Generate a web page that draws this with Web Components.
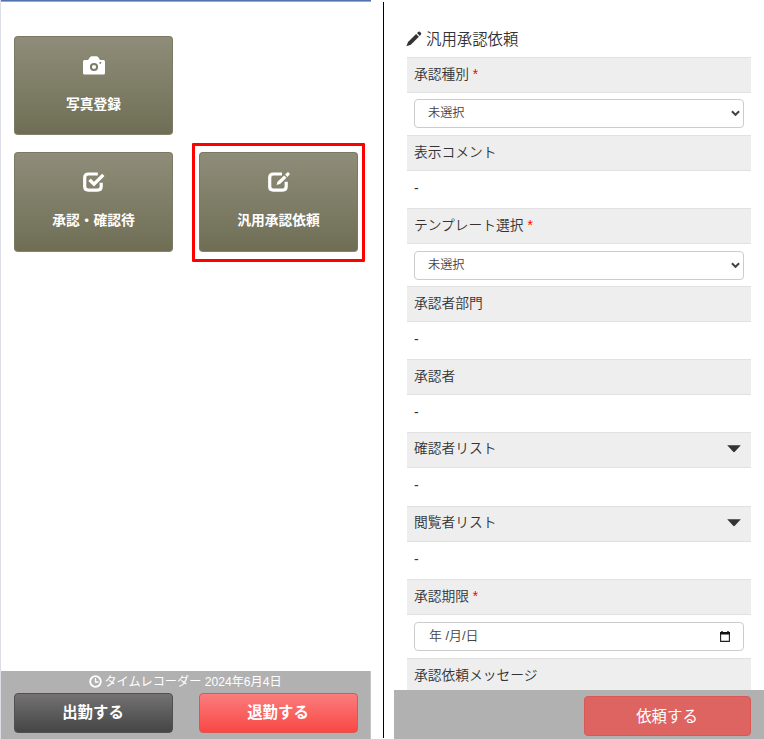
<!DOCTYPE html>
<html lang="ja"><head><meta charset="utf-8"><title>汎用承認依頼</title>
<style>
html,body{margin:0;height:739px;overflow:hidden;background:#fff}
body{font-family:"Liberation Sans","Noto Sans CJK JP",sans-serif;color:#333}
</style></head><body>
<app-screen></app-screen>
<script>
const icons={
camera:'<svg width="22" height="19" viewBox="0 0 22 19"><path fill="#fff" d="M1.5 4H5L7 1.2Q7.7.3 9 .3H13.3Q14.6.3 15.3 1.2L17 4H20.5Q22 4 22 5.5V17Q22 18.5 20.5 18.5H1.5Q0 18.5 0 17V5.5Q0 4 1.5 4Z"/><circle cx="11" cy="11" r="3.1" fill="none" stroke="#7f7d69" stroke-width="2"/><rect x="16.5" y="6" width="1.7" height="1.7" fill="#7f7d69"/></svg>',
check:'<svg width="22" height="20" viewBox="0 0 22 20"><path fill="none" stroke="#fff" stroke-width="3.2" d="M14.8 2H5.3Q1.7 2 1.7 5.6V14.6Q1.7 18.2 5.3 18.2H14.6Q18.2 18.2 18.2 14.6V10.8"/><path fill="none" stroke="#fff" stroke-width="3.4" d="M6.5 7.8 11 12.2 20.3 2.9"/></svg>',
edit:'<svg width="22" height="20" viewBox="0 0 22 20"><path fill="none" stroke="#fff" stroke-width="3.2" d="M14 2H5.3Q1.7 2 1.7 5.6V14.6Q1.7 18.2 5.3 18.2H14.6Q18.2 18.2 18.2 14.6V9.8"/><path fill="#fff" d="M8.5 13 9.5 9.7 16.2 3.5 18.5 5.8 12 12.1ZM17.1 2.6 19.2.6Q20 0 20.7.6L21.5 1.4Q22.1 2.1 21.4 2.8L19.4 4.9Z"/></svg>',
clock:'<svg width="13" height="13" viewBox="0 0 13 13" fill="none" stroke="#fff"><circle cx="6.5" cy="6.5" r="5.3" stroke-width="1.8"/><path stroke-width="1.3" d="M6.5 3V7H9.5"/></svg>',
pencil:'<svg width="16" height="16" viewBox="0 0 16 16" fill="#333"><path d="M.4 15.3 2 10.9 10.1 3 12.9 5.8 4.8 13.7ZM11 2.1 12.5.8Q13.2.2 13.9.8L15 1.9Q15.7 2.6 15.1 3.3L13.8 4.9Z"/></svg>',
chevron:'<svg width="9" height="7" viewBox="0 0 9 7"><path d="M.9 1.3 4.5 4.8 8.1 1.3" fill="none" stroke="#444" stroke-width="2"/></svg>',
calendar:'<svg width="10" height="12" viewBox="0 0 10 12"><path d="M.6 2H9.4V10.4H.6Z" fill="none" stroke="#222" stroke-width="1.1"/><path d="M0 1H1.3V0H2.7V1H7.3V0H8.7V1H10V3.4H0Z" fill="#111"/></svg>',
caret:'<svg width="14" height="8" viewBox="0 0 14 8"><path d="M.2.3H13.8L7.8 6.8Q7 7.6 6.2 6.8Z" fill="#333"/></svg>'};
function define(name,css,html){
 customElements.define(name,class extends HTMLElement{
  constructor(){super();this.attachShadow({mode:'open'})}
  connectedCallback(){this.shadowRoot.innerHTML='<style>*{box-sizing:border-box}'+css+'</style>'+(typeof html==='function'?html(this):html)}
 });
}
define('ui-icon',':host{display:inline-flex;flex:none}svg{display:block}',e=>icons[e.getAttribute('name')]);
define('menu-tile',`:host{display:flex;flex-direction:column;align-items:center;box-sizing:border-box;width:159px;height:100px;padding-top:19px;border:1px solid #7b7963;border-bottom-color:#85836f;border-radius:4px;background:linear-gradient(#8f8d79,#6f6e55);color:#fff}
 span{margin-top:17px;font-size:13.75px;line-height:24px;font-weight:700;white-space:nowrap}ui-icon{height:20px;align-items:flex-start}`,e=>`<ui-icon name="${e.getAttribute('icon')}"></ui-icon><span><slot></slot></span>`);
define('clock-button',`:host{display:flex;align-items:center;justify-content:center;box-sizing:border-box;width:159px;height:40px;padding-right:1px;border:1px solid #505050;border-radius:4px;background:linear-gradient(#747273,#454545);color:#fff;font-size:15.4px;font-weight:700;line-height:38px}
 :host([kind=out]){border-color:#d95855;background:linear-gradient(#fa7d7d,#f94845)}`,'<slot></slot>');
define('home-pane',`:host{display:flex;flex-direction:column;width:371px;height:739px;box-sizing:border-box;border-left:1px solid #dddde6}
 .top{height:2px;background:linear-gradient(#5272b0 50%,#95a8cf 50%)}
 .tiles{display:grid;grid-template-columns:159px 159px;gap:16px 26px;padding:34px 0 0 13px;flex:1;align-content:start}
 .mark{margin:-9px -7px;padding:6px 4px;border:3px solid #f00;border-radius:1px;grid-column:2;width:173px;height:119px}
 .first{grid-column:1/3;height:99px}.first{margin-bottom:1px}
 footer{height:68px;background:#b1b1b1;border-right:1px solid #c4c4c4;color:#fff}
 .time{display:flex;justify-content:center;align-items:center;height:22px;gap:2px;font-size:12.15px;line-height:22px;white-space:nowrap}
 .time ui-icon{margin-bottom:2px}
 .buttons{display:flex;gap:26px;padding-left:13px}`,
`<div class="top"></div><div class="tiles"><menu-tile class="first" icon="camera">写真登録</menu-tile><menu-tile icon="check">承認・確認待</menu-tile><div class="mark"><menu-tile icon="edit">汎用承認依頼</menu-tile></div></div>
<footer><div class="time"><ui-icon name="clock"></ui-icon><span>タイムレコーダー 2024年6月4日</span></div><div class="buttons"><clock-button>出勤する</clock-button><clock-button kind="out">退勤する</clock-button></div></footer>`);
define('form-label',`:host{display:flex;align-items:center;box-sizing:border-box;height:36px;padding:0 11px 1px 7px;border-top:1px solid #e1e1e1;border-bottom:1px solid #e1e1e1;background:#eee;font-size:13.75px;font-weight:350;line-height:30px;white-space:pre}
 :host([list]){padding-bottom:2px}
 b{color:#f00;font-weight:400;font-size:13.75px}ui-icon{margin:0 -1px 0 auto}`,e=>`<span><slot></slot>${e.hasAttribute('required')?'<b> *</b>':''}</span>${e.hasAttribute('list')?'<ui-icon name="caret"></ui-icon>':''}`);
define('form-value',':host{display:flex;align-items:center;box-sizing:border-box;padding:0 7px 4px;font-size:14px}','<slot></slot>');
define('form-field',`:host{display:block;padding:7px 7px 0}
 :host(.first){padding-top:6px}
 div{height:29px;border:1px solid #ccc;border-radius:4px;display:flex;align-items:center;justify-content:space-between;padding:0 3px 0 13px;background:#fff;color:#444;font-size:12.2px;font-weight:350;line-height:16px;white-space:pre}
 span{padding-bottom:1px}
 div.date{padding:0 13px 0 14px}.date span{font-size:12.9px}`,e=>`<div class="${e.getAttribute('icon')==='calendar'?'date':''}"><span><slot></slot></span><ui-icon name="${e.getAttribute('icon')}"></ui-icon></div>`);
define('request-pane',`:host{display:grid;grid-template-rows:690px 49px;width:370px;height:739px}
 main{overflow:hidden;padding:0 13px}
 h1{display:flex;align-items:center;gap:4px;margin:0;height:57px;padding-top:22px;font-size:15.4px;font-weight:350;line-height:34px}
 h1 ui-icon{margin:0 0 2px -1px}
 section{display:grid;grid-template-rows:36px 42px 36px 37px 36px 42px 36px 37px 36px 37px 36px 38px 36px 37px 36px 43px 36px}
 footer{background:#b1b1b1;display:flex;justify-content:flex-end;padding:6px 13px 3px}
 button{font:400 15.4px "Liberation Sans","Noto Sans CJK JP",sans-serif;color:#fff;width:167px;height:40px;border:1px solid #d95855;border-radius:4px;background:#de6461;padding:0 1px 3px 0}`,
`<main><h1><ui-icon name="pencil"></ui-icon><span>汎用承認依頼</span></h1><section>
<form-label required>承認種別</form-label><form-field class="first" icon="chevron">未選択</form-field>
<form-label>表示コメント</form-label><form-value>-</form-value>
<form-label required>テンプレート選択</form-label><form-field icon="chevron">未選択</form-field>
<form-label>承認者部門</form-label><form-value>-</form-value>
<form-label>承認者</form-label><form-value>-</form-value>
<form-label list>確認者リスト</form-label><form-value>-</form-value>
<form-label list>閲覧者リスト</form-label><form-value>-</form-value>
<form-label required>承認期限</form-label><form-field icon="calendar">年 /月/日</form-field>
<form-label>承認依頼メッセージ</form-label>
</section></main><footer><button>依頼する</button></footer>`);
define('app-screen',`:host{display:flex;width:764px;height:739px}
 i{width:1px;height:736px;margin:2px 10px 0 12px;background:#000}`,'<home-pane></home-pane><i></i><request-pane></request-pane>');
</script></body></html>
